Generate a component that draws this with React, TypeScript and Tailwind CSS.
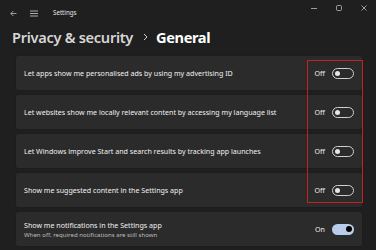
import React from "react";

type Row = { title: string; sub?: string; on: boolean };

const rows: Row[] = [
  { title: "Let apps show me personalised ads by using my advertising ID", on: false },
  { title: "Let websites show me locally relevant content by accessing my language list", on: false },
  { title: "Let Windows improve Start and search results by tracking app launches", on: false },
  { title: "Show me suggested content in the Settings app", on: false },
  {
    title: "Show me notifications in the Settings app",
    sub: "When off, required notifications are still shown",
    on: true,
  },
];

function Toggle({ on }: { on: boolean }) {
  if (on) {
    return (
      <div className="flex h-[11px] w-[22px] items-center justify-end rounded-full bg-[#b9cdea] pr-[2px]">
        <div className="h-[6px] w-[6px] rounded-full bg-black" />
      </div>
    );
  }
  return (
    <div className="flex h-[11px] w-[22px] items-center rounded-full border border-[#cfcfcf] pl-[2px]">
      <div className="h-[5px] w-[5px] rounded-full bg-[#e6e6e6]" />
    </div>
  );
}

function SettingRow({ row }: { row: Row }) {
  return (
    <div className="flex h-[36px] items-center rounded-[3px] border border-[#1d1d1d] bg-[#2b2b2b] pl-[8px] pr-[8px]">
      <div className="flex min-w-0 flex-1 flex-col">
        <span className="whitespace-nowrap text-[7.1px] leading-[10px] text-[#f0f0f0]">{row.title}</span>
        {row.sub && (
          <span className="whitespace-nowrap text-[6.1px] leading-[9px] text-[#bdbdbd]">{row.sub}</span>
        )}
      </div>
      <span className="mr-[7px] text-[7.1px] text-[#f0f0f0]">{row.on ? "On" : "Off"}</span>
      <Toggle on={row.on} />
    </div>
  );
}

export default function App() {
  return (
    <div
      className="relative flex h-[250px] w-[376px] flex-col overflow-hidden bg-[#1f1f1f]"
      style={{ fontFamily: '"Noto Sans", "Open Sans", sans-serif' }}
    >
      {/* title bar */}
      <div className="flex h-[24px] items-start">
        <div className="flex h-[26px] items-center pl-[10px]">
          <svg width="7" height="7" viewBox="0 0 7 7" fill="none" stroke="#bdbdbd" strokeWidth="0.8">
            <path d="M6.5 3.5H0.8M3.3 1L0.8 3.5L3.3 6" />
          </svg>
          <svg className="ml-[13px]" width="8" height="7" viewBox="0 0 8 7" fill="none" stroke="#d0d0d0" strokeWidth="0.8">
            <path d="M0 1H8M0 3.5H8M0 6H8" />
          </svg>
          <span className="ml-[15px] text-[6.2px] text-[#e6e6e6]">Settings</span>
        </div>
        <div className="ml-auto flex h-[16px] items-center gap-[19px] pr-[9px]">
          <svg width="6" height="6" viewBox="0 0 6 6" fill="none" stroke="#bdbdbd" strokeWidth="0.8">
            <path d="M0 3.5H6" />
          </svg>
          <svg width="6" height="6" viewBox="0 0 6 6" fill="none" stroke="#bdbdbd" strokeWidth="0.8">
            <rect x="0.5" y="0.5" width="5" height="5" rx="1" />
          </svg>
          <svg width="6" height="6" viewBox="0 0 6 6" fill="none" stroke="#bdbdbd" strokeWidth="0.8">
            <path d="M0.5 0.5L5.5 5.5M5.5 0.5L0.5 5.5" />
          </svg>
        </div>
      </div>

      {/* heading */}
      <div className="flex h-[26px] items-center pl-[12px]">
        <span className="text-[14.6px] font-semibold leading-none tracking-[-0.3px] text-[#d6d6d6]">Privacy &amp; security</span>
        <svg className="ml-[10px] mr-[8px]" width="5" height="8" viewBox="0 0 5 8" fill="none" stroke="#d0d0d0" strokeWidth="1">
          <path d="M1 1L4 4L1 7" />
        </svg>
        <span className="text-[14.6px] font-bold leading-none tracking-[-0.4px] text-white">General</span>
      </div>

      {/* cards */}
      <div className="mt-[5px] flex flex-col gap-[3px] pl-[15px] pr-[13px]">
        {rows.map((r) => (
          <SettingRow key={r.title} row={r} />
        ))}
      </div>

      {/* annotation box */}
      <div className="absolute left-[307px] top-[60px] h-[143px] w-[56px] border border-[#c42026]" />
    </div>
  );
}
